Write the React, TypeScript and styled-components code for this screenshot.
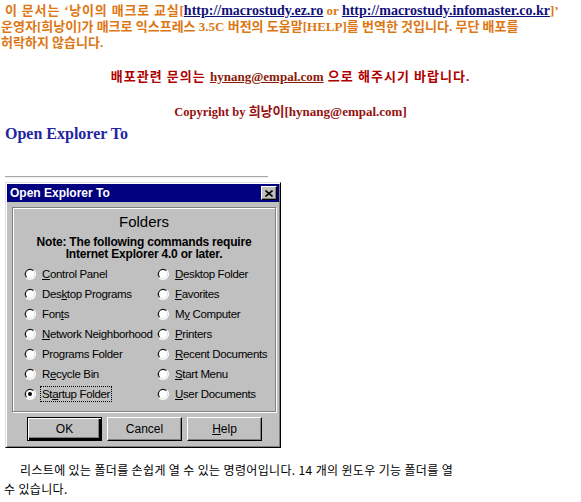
import React from 'react';
import styled, { createGlobalStyle } from 'styled-components';

const Global = createGlobalStyle`
  html, body { margin: 0; padding: 0; background: #ffffff; }
  body { width: 581px; height: 502px; overflow: hidden; }
`;

const Page = styled.div`
  display: flex;
  flex-direction: column;
  align-items: flex-start;
`;

const Intro = styled.p`
  margin: 3px 0 0 1px;
  font: bold 13px/16px "Liberation Serif", "Noto Sans CJK KR", serif;
  color: #dc7714;
  white-space: nowrap;
`;

const Spaced = styled.span<{ $ls: number }>`
  letter-spacing: ${(p) => p.$ls}px;
`;

const Link = styled.a`
  color: #10107a;
  text-decoration: underline;
  font-size: 14px;
`;

const CenterLine = styled.p<{ $mt: number; $color: string }>`
  align-self: stretch;
  text-align: center;
  margin: ${(p) => p.$mt}px 0 0;
  font: bold 13px/16px "Liberation Serif", "Noto Sans CJK KR", serif;
  color: ${(p) => p.$color};
  white-space: nowrap;
`;

const Mail = styled.span`
  color: #8a1a08;
  text-decoration: underline;
  letter-spacing: 0;
`;

const Small = styled.span`
  font-size: 12.5px;
  letter-spacing: 0;
`;

const Heading = styled.h2`
  margin: 5px 0 0 5px;
  font: bold 16px/18px "Liberation Serif", serif;
  color: #2424a2;
`;

const Rule = styled.div`
  margin: 33px 0 0 5px;
  width: 263px;
  height: 0;
  border-top: 1px solid #a8a8a8;
  border-bottom: 1px solid #f0f0f0;
`;

const Window = styled.div`
  margin: 4px 0 0 5px;
  width: 276px;
  box-sizing: border-box;
  background: #c0c0c0;
  border: 1px solid;
  border-color: #dfdfdf #000000 #000000 #dfdfdf;
  box-shadow: inset 1px 1px #ffffff, inset -1px -1px #808080;
  padding: 1px;
  font-family: "Liberation Sans", Arial, sans-serif;
`;

const TitleBar = styled.div`
  height: 18px;
  background: #000080;
  display: flex;
  align-items: center;
  justify-content: space-between;
  padding: 0 2px 0 3px;
  color: #ffffff;
  font: bold 12px/18px "Liberation Sans", Arial, sans-serif;
`;

const CloseBox = styled.div`
  width: 16px;
  height: 14px;
  box-sizing: border-box;
  background: #c0c0c0;
  border: 1px solid;
  border-color: #ffffff #000000 #000000 #ffffff;
  box-shadow: inset -1px -1px #808080;
  display: flex;
  align-items: center;
  justify-content: center;
`;

const Content = styled.div`
  padding: 5px 3px 5px 5px;
  display: flex;
  flex-direction: column;
`;

const Panel = styled.div`
  height: 205px;
  box-sizing: border-box;
  border: 1px solid #808080;
  box-shadow: 1px 1px 0 #ffffff, inset 1px 1px 0 #ffffff;
  display: flex;
  flex-direction: column;
  align-items: stretch;
`;

const PanelTitle = styled.div`
  margin-top: 5px;
  text-align: center;
  font: 15px/18px "Liberation Sans", Arial, sans-serif;
  color: #000;
`;

const Note = styled.div`
  margin-top: 5px;
  text-align: center;
  font: bold 12px/12px "Liberation Sans", Arial, sans-serif;
  letter-spacing: -0.2px;
  color: #000;
`;

const NoteLine = styled.div`
  height: 12px;
`;

const OptionGrid = styled.div`
  margin-top: 4px;
  padding-left: 11px;
  display: grid;
  grid-template-columns: 133px 1fr;
  grid-auto-flow: column;
  grid-template-rows: repeat(7, 20px);
`;

const Option = styled.label`
  display: flex;
  align-items: center;
  font: 11.5px/14px "Liberation Sans", Arial, sans-serif;
  letter-spacing: -0.35px;
  color: #000;
  white-space: nowrap;
`;

const OptionText = styled.span<{ $focus?: boolean }>`
  margin-left: ${(p) => (p.$focus ? 5 : 6)}px;
  padding: 0 ${(p) => (p.$focus ? 1 : 0)}px;
  outline: ${(p) => (p.$focus ? '1px dotted #000' : 'none')};
`;

const ButtonRow = styled.div`
  margin-top: 5px;
  display: flex;
  justify-content: center;
  gap: 5px;
  padding-left: 1px;
`;

const Button = styled.button<{ $default?: boolean }>`
  width: 75px;
  height: 24px;
  box-sizing: border-box;
  background: #c0c0c0;
  border: 1px solid;
  border-color: ${(p) => (p.$default ? '#000' : '#ffffff #000 #000 #ffffff')};
  box-shadow: ${(p) =>
    p.$default
      ? 'inset 1px 1px #ffffff, inset -2px -2px #000, inset -3px -3px #808080'
      : 'inset -1px -1px #808080'};
  font: 12px/14px "Liberation Sans", Arial, sans-serif;
  color: #000;
  padding: 0;
`;

const Footer = styled.p`
  margin: 12px 0 0 4px;
  font: 12px/19px "Noto Sans CJK KR", "Liberation Sans", sans-serif;
  letter-spacing: 0.35px;
  color: #000;
  text-indent: 16px;
  white-space: nowrap;
`;

const Radio = ({ checked }: { checked?: boolean }) => (
  <svg width="12" height="12" viewBox="0 0 12 12" style={{ flex: 'none' }}>
    <circle cx="6" cy="6" r="6" fill="#ffffff" />
    <path d="M1.76 10.24 A6 6 0 0 1 10.24 1.76 Z" fill="#808080" />
    <circle cx="6" cy="6" r="5" fill="#dfdfdf" />
    <path d="M2.46 9.54 A5 5 0 0 1 9.54 2.46 Z" fill="#000000" />
    <circle cx="6" cy="6" r="4" fill="#ffffff" />
    {checked && <circle cx="6" cy="6" r="2" fill="#000000" />}
  </svg>
);

type Opt = { pre: string; key: string; post: string; checked?: boolean };

const options: Opt[] = [
  { pre: '', key: 'C', post: 'ontrol Panel' },
  { pre: 'Des', key: 'k', post: 'top Programs' },
  { pre: 'Fon', key: 't', post: 's' },
  { pre: '', key: 'N', post: 'etwork Neighborhood' },
  { pre: 'Programs Folder', key: '', post: '' },
  { pre: 'R', key: 'e', post: 'cycle Bin' },
  { pre: 'St', key: 'a', post: 'rtup Folder', checked: true },
  { pre: '', key: 'D', post: 'esktop Folder' },
  { pre: '', key: 'F', post: 'avorites' },
  { pre: 'M', key: 'y', post: ' Computer' },
  { pre: '', key: 'P', post: 'rinters' },
  { pre: '', key: 'R', post: 'ecent Documents' },
  { pre: '', key: 'S', post: 'tart Menu' },
  { pre: '', key: 'U', post: 'ser Documents' },
];

export default function App() {
  return (
    <Page>
      <Global />
      <Intro>
        <Spaced $ls={0.8}>&nbsp;이 문서는 ‘낭이의 매크로 교실</Spaced>[<Link>http://macrostudy.ez.ro</Link> or{' '}
        <Link>http://macrostudy.infomaster.co.kr</Link>]’
        <br />
        운영자[희낭이]가 매크로 익스프레스 3.5C 버전의 도움말[HELP]를 번역한 것입니다. 무단 배포를
        <br />
        허락하지 않습니다.
      </Intro>
      <CenterLine $mt={18} $color="#b00000">
        <Spaced $ls={1}>
          배포관련 문의는 <Mail>hynang@empal.com</Mail> 으로 해주시기 바랍니다.
        </Spaced>
      </CenterLine>
      <CenterLine $mt={19} $color="#951010">
        <Small>Copyright by</Small> 희낭이[hynang@empal.com]
      </CenterLine>
      <Heading>Open Explorer To</Heading>
      <Rule />
      <Window>
        <TitleBar>
          <span>Open Explorer To</span>
          <CloseBox>
            <svg width="8" height="7" viewBox="0 0 8 7">
              <path d="M0.5 0.5 L7.5 6.5 M7.5 0.5 L0.5 6.5" stroke="#000" strokeWidth="1.6" />
            </svg>
          </CloseBox>
        </TitleBar>
        <Content>
          <Panel>
            <PanelTitle>Folders</PanelTitle>
            <Note>
              <NoteLine>Note: The following commands require</NoteLine>
              <NoteLine>Internet Explorer 4.0 or later.</NoteLine>
            </Note>
            <OptionGrid>
              {options.map((o, i) => (
                <Option key={i}>
                  <Radio checked={o.checked} />
                  <OptionText $focus={o.checked}>
                    {o.pre}
                    {o.key && <u>{o.key}</u>}
                    {o.post}
                  </OptionText>
                </Option>
              ))}
            </OptionGrid>
          </Panel>
          <ButtonRow>
            <Button $default>OK</Button>
            <Button>Cancel</Button>
            <Button>
              <u>H</u>elp
            </Button>
          </ButtonRow>
        </Content>
      </Window>
      <Footer>
        리스트에 있는 폴더를 손쉽게 열 수 있는 명령어입니다. 14 개의 윈도우 기능 폴더를 열
        <br />
        수 있습니다.
      </Footer>
    </Page>
  );
}
